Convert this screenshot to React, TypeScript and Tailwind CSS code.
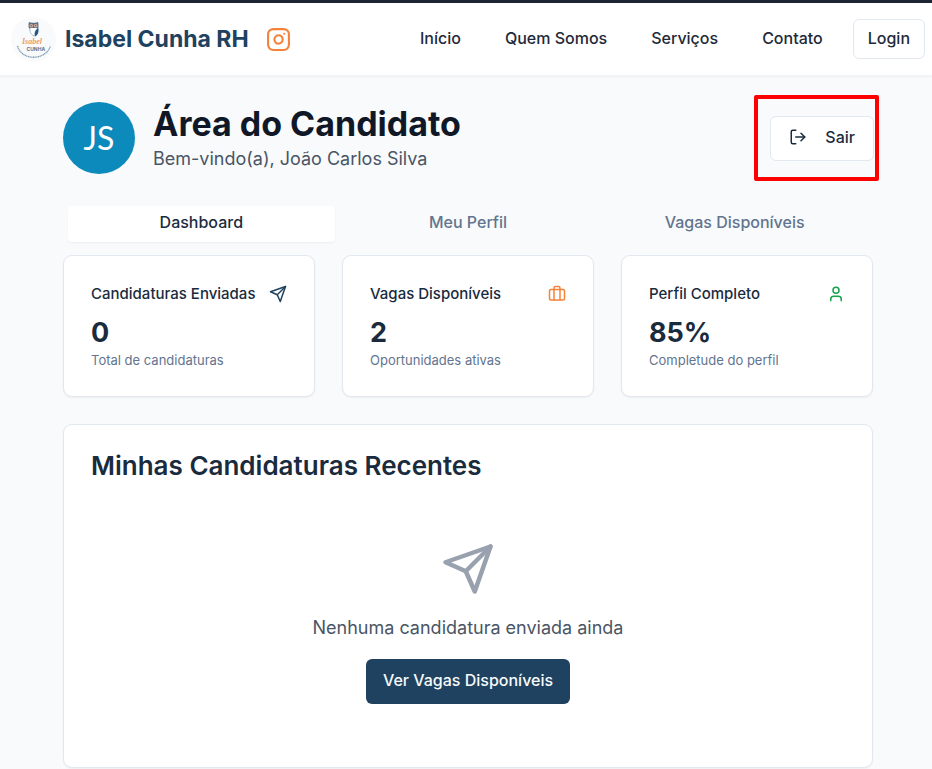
import type { ReactNode } from "react";
import { Briefcase, Instagram, LogOut, User } from "lucide-react";

const navLinks = ["Início", "Quem Somos", "Serviços", "Contato"];
const tabs = ["Dashboard", "Meu Perfil", "Vagas Disponíveis"];

function SendIcon({ className }: { className: string }) {
  return (
    <svg
      viewBox="0 0 24 24"
      fill="none"
      stroke="currentColor"
      strokeWidth="2"
      strokeLinecap="round"
      strokeLinejoin="round"
      aria-hidden="true"
      className={className}
    >
      <path d="m22 2-7 20-4-9-9-4Z" />
      <path d="M22 2 11 13" />
    </svg>
  );
}

function Logo() {
  return (
    <svg viewBox="0 0 45 45" className="size-[45px] shrink-0" role="img" aria-label="Isabel Cunha">
      <circle cx="22.5" cy="22.5" r="22.5" fill="#f8fafc" />
      <path d="M19 10c-.6 4 .5 7.500 4 9 3.500-1 4.500-5 4-9Z" fill="#fff" stroke="#7f9db5" strokeWidth=".7" />
      <path d="M18 5c1.500 1 7.500 1 9 0 .7 2 .7 4.500 0 6.500-3-.6-6-.6-9 0-.7-2-.7-4.500 0-6.500Z" fill="#5b7389" />
      <circle cx="20.300" cy="8.800" r="1.800" fill="#dcae94" />
      <circle cx="24.700" cy="8.800" r="1.800" fill="#dcae94" />
      <circle cx="20.300" cy="8.800" r=".7" fill="#4a6680" />
      <circle cx="24.700" cy="8.800" r=".7" fill="#4a6680" />
      <path d="M27 11c1 3.500.3 6.800-3 8.500-1.200-3.500 0-6.500 3-8.500Z" fill="#24577f" />
      <text x="11" y="27" fontSize="8" fontStyle="italic" fill="#f09a70" fontFamily="Liberation Serif, serif">
        Isabel
      </text>
      <text x="15.500" y="33.500" fontSize="5" fontWeight="700" fill="#507693" fontFamily="Inter, sans-serif">
        CUNHA
      </text>
      <path d="M6.500 29c4 15 28 15 33 0" fill="none" stroke="#7d9aae" strokeWidth="1.300" strokeDasharray="1.200 .5" />
    </svg>
  );
}

function StatCard({ title, value, note, icon }: { title: string; value: string; note: string; icon: ReactNode }) {
  return (
    <article className="rounded-[9px] border border-slate-200 bg-white p-[27px] shadow-xs">
      <div className="flex h-[22px] items-center justify-between">
        <h2 className="text-[15px] leading-[22px] font-medium whitespace-nowrap">{title}</h2>
        {icon}
      </div>
      <p className="mt-[10px] text-[27px] leading-9 font-bold">{value}</p>
      <p className="text-[13px] leading-[18px] text-slate-500">{note}</p>
    </article>
  );
}

export default function App() {
  return (
    <div className="min-h-screen border-t-[3px] border-[#1c2434] bg-slate-50 font-[Inter,sans-serif] text-[#1a2b3e]">
      <header className="flex h-[73px] items-center justify-between border-b border-slate-100 bg-white pr-[7px] pl-[11px] shadow-xs">
        <div className="flex items-center">
          <a href="#inicio" className="flex items-center gap-[9px] text-[23px] font-bold whitespace-nowrap text-[#1e425f]">
            <Logo />
            Isabel Cunha RH
          </a>
          <a href="#instagram" aria-label="Instagram" className="ml-[17px] text-[#f5823b]">
            <Instagram className="size-[25px]" />
          </a>
        </div>
        <nav className="flex items-center text-base font-medium whitespace-nowrap text-gray-800">
          <div className="flex gap-[44px] pb-[2px]">
            {navLinks.map((link) => (
              <a key={link} href="#nav">
                {link}
              </a>
            ))}
          </div>
          <button type="button" className="ml-[30px] h-10 rounded-md border border-slate-200 bg-white px-[14px] pb-[3px]">
            Login
          </button>
        </nav>
      </header>

      <main className="pt-[19px] pr-[59px] pl-[63px]">
        <div className="flex items-center justify-between">
          <div className="flex items-center gap-[18px]">
            <div className="flex size-[72px] items-center justify-center rounded-full bg-[#0d8abc] font-[Lato,sans-serif] text-[32px] text-white">
              JS
            </div>
            <div className="pt-[2px]">
              <h1 className="text-[34px] leading-10 font-bold text-gray-900">Área do Candidato</h1>
              <p className="text-lg leading-[30px] text-gray-600">Bem-vindo(a), João Carlos Silva</p>
            </div>
          </div>
          <div className="-mr-[6px] flex h-[86px] w-[125px] items-center justify-end rounded-xs border-4 border-[#ff0000] pr-px">
            <button
              type="button"
              className="flex h-[45px] items-center gap-[18px] rounded-md border border-slate-200 bg-white px-[18px] pb-[2px] text-base font-medium"
            >
              <LogOut className="size-[18px]" />
              Sair
            </button>
          </div>
        </div>

        <div role="tablist" className="mt-5 grid grid-cols-3 p-[5px] text-base font-medium">
          {tabs.map((tab, i) => (
            <button
              key={tab}
              type="button"
              role="tab"
              aria-selected={i === 0}
              className={
                i === 0
                  ? "h-9 rounded-[4px] bg-white pb-1 shadow-xs"
                  : "h-9 rounded-[4px] pb-1 text-slate-500"
              }
            >
              {tab}
            </button>
          ))}
        </div>

        <section className="mt-2 grid grid-cols-3 gap-[27px]">
          <StatCard
            title="Candidaturas Enviadas"
            value="0"
            note="Total de candidaturas"
            icon={<SendIcon className="size-[18px] text-[#1e425f]" />}
          />
          <StatCard
            title="Vagas Disponíveis"
            value="2"
            note="Oportunidades ativas"
            icon={<Briefcase className="size-[18px] text-[#f5823b]" />}
          />
          <StatCard
            title="Perfil Completo"
            value="85%"
            note="Completude do perfil"
            icon={<User className="size-[18px] text-[#16a34a]" />}
          />
        </section>

        <section className="mt-[27px] rounded-[9px] border border-slate-200 bg-white p-[27px] shadow-xs">
          <h2 className="text-[26px] leading-7 font-semibold">Minhas Candidaturas Recentes</h2>
          <div className="flex flex-col items-center pt-[62px] pb-9">
            <SendIcon className="size-[54px] text-gray-400" />
            <p className="mt-[18px] text-lg leading-7 text-gray-600">Nenhuma candidatura enviada ainda</p>
            <button
              type="button"
              className="mt-[17px] h-[45px] rounded-md bg-[#1e425f] px-[17px] pb-[3px] text-base font-medium text-slate-50"
            >
              Ver Vagas Disponíveis
            </button>
          </div>
        </section>
      </main>
    </div>
  );
}
